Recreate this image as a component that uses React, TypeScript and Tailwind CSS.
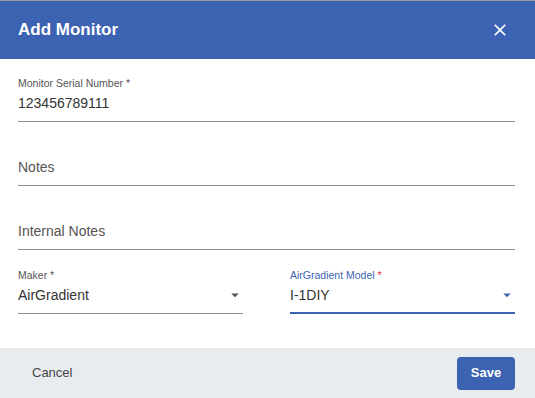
import React from "react";

const font = { fontFamily: '"Liberation Sans", Arial, Helvetica, sans-serif' };

function Arrow({ color }: { color: string }) {
  return (
    <svg width="18" height="18" viewBox="0 0 24 24" className="shrink-0">
      <path d="M7 10l5 5 5-5z" fill={color} />
    </svg>
  );
}

function Field({
  label,
  value,
  placeholder,
  select,
  focused,
}: {
  label?: string;
  value?: string;
  placeholder?: string;
  select?: boolean;
  focused?: boolean;
}) {
  return (
    <div className="flex flex-col">
      <div
        className={`h-[14px] text-[10.5px] leading-[14px] ${focused ? "text-[#3c62b2]" : "text-[#555]"}`}
      >
        {label ? (
          <>
            {label} <span className={focused ? "text-[#d33]" : ""}>*</span>
          </>
        ) : null}
      </div>
      <div
        className={`flex items-center justify-between pt-[3px] ${focused ? "pb-[7px] border-b-2 border-[#3c62b2]" : "pb-[8px] border-b border-[#8c8c8c]"}`}
      >
        <span
          className={`text-[14px] leading-[20px] ${value ? "text-[#333]" : "text-[#555]"}`}
        >
          {value ?? placeholder}
        </span>
        {select ? (
          <span className="-mr-[1px]">
            <Arrow color={focused ? "#3c62b2" : "#555"} />
          </span>
        ) : null}
      </div>
    </div>
  );
}

export default function App() {
  return (
    <div className="w-[535px] h-[398px] bg-white flex flex-col overflow-hidden" style={font}>
      <div className="h-[1px] bg-[#9a9a9a]" />
      <div className="h-[58px] bg-[#3c62b2] flex items-center justify-between pl-[18px] pr-[25px]">
        <span className="text-white font-bold text-[17px]">Add Monitor</span>
        <svg width="20" height="20" viewBox="0 0 24 24">
          <path
            fill="white"
            d="M19 6.41L17.59 5 12 10.59 6.41 5 5 6.41 10.59 12 5 17.59 6.41 19 12 13.41 17.59 19 19 17.59 13.41 12z"
          />
        </svg>
      </div>
      <div className="flex-1 flex flex-col gap-[18px] pl-[18px] pr-[20px] pt-[17px]">
        <Field label="Monitor Serial Number" value="123456789111" />
        <Field placeholder="Notes" />
        <Field placeholder="Internal Notes" />
        <div className="grid grid-cols-2 gap-[47px]">
          <Field label="Maker" value="AirGradient" select />
          <Field label="AirGradient Model" value="I-1DIY" select focused />
        </div>
      </div>
      <div className="h-[50px] bg-[#e9ecef] flex items-center justify-between pl-[32px] pr-[20px]">
        <span className="text-[13px] text-[#444]">Cancel</span>
        <button className="w-[58px] h-[33px] rounded-[4px] bg-[#3c62b2] text-white text-[13px] font-bold">
          Save
        </button>
      </div>
    </div>
  );
}
